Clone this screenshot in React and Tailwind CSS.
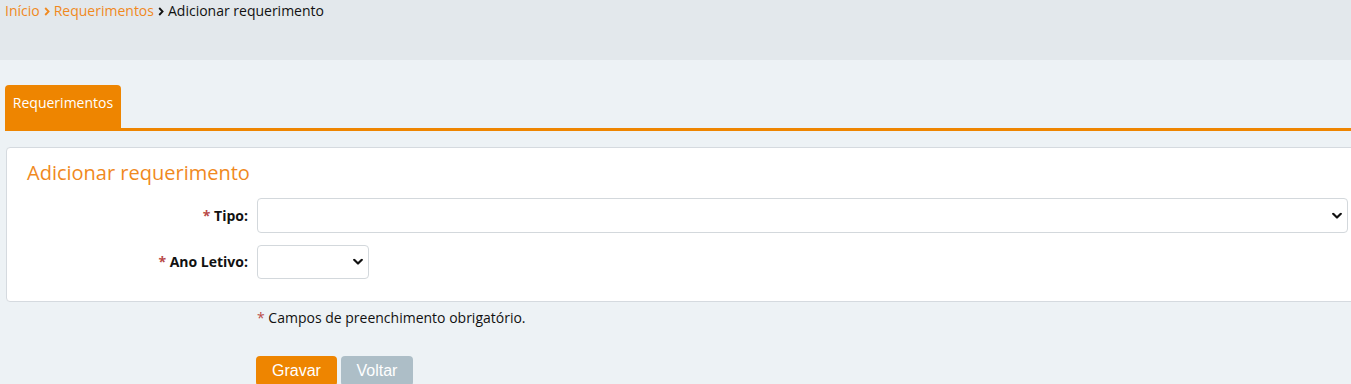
import React from 'react';

const Chevron = () => (
  <svg width="10" height="7" viewBox="0 0 10 7" className="pointer-events-none absolute right-[6px] top-1/2 -translate-y-1/2">
    <path d="M1.2 1.3 L5 5 L8.8 1.3" fill="none" stroke="#111" strokeWidth="2.2" strokeLinecap="round" strokeLinejoin="round" />
  </svg>
);

const Crumb = ({ color }) => (
  <svg width="6" height="9" viewBox="0 0 6 9" className="mx-[4px] mt-[1px]">
    <path d="M1.2 1 L4.6 4.5 L1.2 8" fill="none" stroke={color} strokeWidth="1.8" />
  </svg>
);

const SelectBox = ({ className }) => (
  <div className={`relative ${className}`}>
    <select className="h-full w-full appearance-none rounded-[4px] border border-[#d3d8dc] bg-white px-2 text-sm outline-none" defaultValue="">
      <option value=""></option>
    </select>
    <Chevron />
  </div>
);

const Field = ({ label, children }) => (
  <div className="flex items-center">
    <label className="w-[250px] pr-[9px] text-right text-sm font-bold text-[#111]">
      <span className="text-[#b94a48]">*</span> {label}:
    </label>
    {children}
  </div>
);

export default function App() {
  return (
    <div className="min-h-screen overflow-hidden bg-[#edf2f5] font-['Open_Sans',sans-serif] text-sm text-[#111]">
      <div className="h-[60px] bg-[#e3e8ec] px-[5px] pt-[1px]">
        <nav className="flex items-center text-sm leading-[20px]">
          <a className="text-[#f0891e]">Início</a>
          <Crumb color="#f0891e" />
          <a className="text-[#f0891e]">Requerimentos</a>
          <Crumb color="#111" />
          <span>Adicionar requerimento</span>
        </nav>
      </div>

      <div className="pl-[5px] pt-[25px]">
        <div className="flex border-b-[3px] border-[#ee8500]">
          <div className="flex h-[43px] w-[116px] items-center justify-center rounded-t-[4px] bg-[#ee8500] pb-[7px] text-sm text-white">
            Requerimentos
          </div>
        </div>
      </div>

      <div className="ml-[6px] mr-[-12px] mt-[16px] rounded-[4px] border border-[#d5dadf] bg-white pb-[22px] pt-[12px]">
        <h2 className="pl-[20px] text-[20px] leading-[26px] text-[#f0891e]">Adicionar requerimento</h2>
        <div className="mt-[12px] flex flex-col gap-[12px]">
          <Field label="Tipo">
            <SelectBox className="mr-[14px] h-[35px] flex-1" />
          </Field>
          <Field label="Ano Letivo">
            <SelectBox className="h-[34px] w-[112px]" />
          </Field>
        </div>
      </div>

      <div className="pl-[257px] pt-[6px]">
        <p className="leading-[20px]">
          <span className="text-[#b94a48]">*</span> Campos de preenchimento obrigatório.
        </p>
        <div className="ml-[-1px] mt-[28px] flex gap-[4px] font-['Liberation_Sans',sans-serif] text-base">
          <button className="h-[30px] w-[81px] rounded-[4px] bg-[#ee8500] text-white">Gravar</button>
          <button className="h-[30px] w-[72px] rounded-[4px] bg-[#adbec7] text-white">Voltar</button>
        </div>
      </div>
    </div>
  );
}
